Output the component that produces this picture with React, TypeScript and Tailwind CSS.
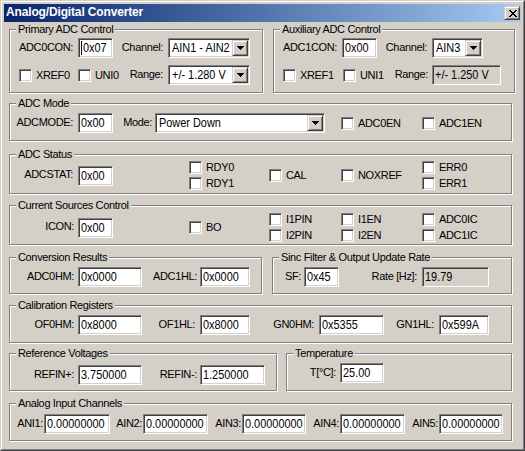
import React from "react";

const SUNKEN =
  "border border-t-[#808080] border-l-[#808080] border-b-white border-r-white shadow-[inset_1px_1px_0_#404040,inset_-1px_-1px_0_#d4d0c8]";
const RAISED =
  "border border-t-[#d4d0c8] border-l-[#d4d0c8] border-b-[#404040] border-r-[#404040] shadow-[inset_1px_1px_0_#fff,inset_-1px_-1px_0_#808080]";
const VAL =
  "font-['Liberation_Sans',Arial,sans-serif] text-[13px] leading-[16px] tracking-normal";
const NARROW = "block shrink-0 origin-left scale-x-[0.84] whitespace-nowrap";

type Kids = { children?: React.ReactNode };

function Lbl({ cls, children }: { cls: string } & Kids) {
  return <div className={`${cls} shrink-0 text-right whitespace-nowrap pb-[2px]`}>{children}</div>;
}

function Edit({ cls, value, gray = false, caret = false }: { cls: string; value: string; gray?: boolean; caret?: boolean }) {
  return (
    <div
      className={`${cls} h-[20px] shrink-0 flex items-center overflow-hidden whitespace-nowrap pl-[2px] ${SUNKEN} ${
        gray ? "bg-[#d4d0c8]" : "bg-white"
      } ${VAL}`}
    >
      {caret && <span className="w-px h-[14px] bg-black mr-[1px] shrink-0" />}
      <span className={NARROW}>{value}</span>
    </div>
  );
}

function Arrow() {
  return (
    <svg width="7" height="4" shapeRendering="crispEdges" className="block">
      <rect x="0" y="0" width="7" height="1" fill="#000" />
      <rect x="1" y="1" width="5" height="1" fill="#000" />
      <rect x="2" y="2" width="3" height="1" fill="#000" />
      <rect x="3" y="3" width="1" height="1" fill="#000" />
    </svg>
  );
}

function Combo({ cls, value }: { cls: string; value: string }) {
  return (
    <div className={`${cls} h-[20px] shrink-0 flex items-center bg-white ${SUNKEN}`}>
      <div className={`flex-1 min-w-0 pl-[3px] overflow-hidden ${VAL}`}>
        <span className={NARROW}>{value}</span>
      </div>
      <div className={`w-[16px] h-[16px] mr-[1px] shrink-0 flex items-center justify-center bg-[#d4d0c8] ${RAISED}`}>
        <Arrow />
      </div>
    </div>
  );
}

function Check({ cls = "", label }: { cls?: string; label: string }) {
  return (
    <div className={`${cls} shrink-0 flex items-center h-[13px]`}>
      <div className={`w-[13px] h-[13px] shrink-0 bg-white ${SUNKEN}`} />
      <span className="ml-[4px] whitespace-nowrap">{label}</span>
    </div>
  );
}

function Group({ title, cls, children }: { title: string; cls: string } & Kids) {
  return (
    <div className={`relative shrink-0 border border-[#808080] shadow-[inset_1px_1px_0_#fff,1px_1px_0_#fff] ${cls}`}>
      <div className="absolute -top-[7px] left-[6px] px-[2px] bg-[#d4d0c8] leading-[13px] whitespace-nowrap">{title}</div>
      {children}
    </div>
  );
}

function CloseX() {
  const rows = [0, 1, 2, 3, 4, 5, 6];
  return (
    <svg width="8" height="7" shapeRendering="crispEdges" className="block ml-[1px]">
      {rows.map((i) => (
        <g key={i}>
          <rect x={i} y={i} width="2" height="1" fill="#000" />
          <rect x={6 - i} y={i} width="2" height="1" fill="#000" />
        </g>
      ))}
    </svg>
  );
}

export default function App() {
  return (
    <div className="w-[525px] h-[451px] bg-[#d4d0c8] border border-t-[#d4d0c8] border-l-[#d4d0c8] border-r-[#404040] border-b-[#404040] font-['Liberation_Sans',Arial,sans-serif] text-[11px] leading-[13px] tracking-[-0.35px] text-black">
      <div className="h-full border border-t-white border-l-white border-r-[#808080] border-b-[#808080] p-[2px]">
        {/* Title bar */}
        <div className="h-[18px] flex items-center bg-linear-to-r from-[#0a246a] to-[#a6caf0] pl-[2px] pr-[1px]">
          <span className="self-start font-bold text-[12px] leading-[17px] tracking-[-0.15px] text-white whitespace-nowrap">
            Analog/Digital Converter
          </span>
          <div className={`ml-auto w-[16px] h-[14px] flex items-center justify-center bg-[#d4d0c8] ${RAISED}`}>
            <CloseX />
          </div>
        </div>

        {/* Body */}
        <div className="flex flex-col pl-[5px]">
          {/* Row 1 */}
          <div className="flex mt-[7px]">
            <Group title="Primary ADC Control" cls="w-[254px] h-[64px] pt-[8px]">
              <div className="flex items-center h-[20px]">
                <Lbl cls="w-[68px] pr-[5px]">ADC0CON:</Lbl>
                <Edit cls="w-[35px]" value="0x07" caret />
                <Lbl cls="w-[55px] pr-[5px]">Channel:</Lbl>
                <Combo cls="w-[82px]" value="AIN1 - AIN2" />
              </div>
              <div className="flex items-center h-[20px] mt-[7px]">
                <Check cls="ml-[9px] w-[59px]" label="XREF0" />
                <Check cls="w-[47px]" label="UNI0" />
                <Lbl cls="w-[43px] pr-[5px]">Range:</Lbl>
                <Combo cls="w-[82px]" value="+/- 1.280 V" />
              </div>
            </Group>
            <Group title="Auxiliary ADC Control" cls="ml-[10px] w-[242px] h-[64px] pt-[8px]">
              <div className="flex items-center h-[20px]">
                <Lbl cls="w-[68px] pr-[5px]">ADC1CON:</Lbl>
                <Edit cls="w-[35px]" value="0x00" />
                <Lbl cls="w-[55px] pr-[5px]">Channel:</Lbl>
                <Combo cls="w-[51px]" value="AIN3" />
              </div>
              <div className="flex items-center h-[20px] mt-[7px]">
                <Check cls="ml-[9px] w-[60px]" label="XREF1" />
                <Check cls="w-[45px]" label="UNI1" />
                <Lbl cls="w-[44px] pr-[4px]">Range:</Lbl>
                <Edit cls="w-[69px]" value="+/- 1.250 V" gray />
              </div>
            </Group>
          </div>

          {/* ADC Mode */}
          <Group title="ADC Mode" cls="mt-[10px] w-[503px] h-[38px] pt-[9px]">
            <div className="flex items-center h-[20px]">
              <Lbl cls="w-[68px] pr-[5px]">ADCMODE:</Lbl>
              <Edit cls="w-[35px]" value="0x00" />
              <Lbl cls="w-[42px] pr-[3px]">Mode:</Lbl>
              <Combo cls="w-[170px]" value="Power Down" />
              <Check cls="ml-[16px] w-[81px]" label="ADC0EN" />
              <Check label="ADC1EN" />
            </div>
          </Group>

          {/* ADC Status */}
          <Group title="ADC Status" cls="mt-[13px] w-[503px] h-[40px] pt-[6px]">
            <div className="flex items-center h-[29px]">
              <Lbl cls="w-[68px] pr-[5px]">ADCSTAT:</Lbl>
              <Edit cls="w-[35px]" value="0x00" />
              <div className="ml-[76px] w-[80px] shrink-0 flex flex-col gap-[3px]">
                <Check label="RDY0" />
                <Check label="RDY1" />
              </div>
              <Check cls="w-[72px]" label="CAL" />
              <Check cls="w-[81px]" label="NOXREF" />
              <div className="shrink-0 flex flex-col gap-[3px]">
                <Check label="ERR0" />
                <Check label="ERR1" />
              </div>
            </div>
          </Group>

          {/* Current Sources Control */}
          <Group title="Current Sources Control" cls="mt-[11px] w-[503px] h-[40px] pt-[7px]">
            <div className="flex items-center h-[29px]">
              <Lbl cls="w-[68px] pr-[4px]">ICON:</Lbl>
              <Edit cls="w-[35px]" value="0x00" />
              <Check cls="ml-[76px] w-[80px]" label="BO" />
              <div className="w-[72px] shrink-0 flex flex-col gap-[3px]">
                <Check label="I1PIN" />
                <Check label="I2PIN" />
              </div>
              <div className="w-[81px] shrink-0 flex flex-col gap-[3px]">
                <Check label="I1EN" />
                <Check label="I2EN" />
              </div>
              <div className="shrink-0 flex flex-col gap-[3px]">
                <Check label="ADC0IC" />
                <Check label="ADC1IC" />
              </div>
            </div>
          </Group>

          {/* Conversion / Sinc */}
          <div className="flex mt-[12px]">
            <Group title="Conversion Results" cls="w-[253px] h-[37px] pt-[9px]">
              <div className="flex items-center h-[20px]">
                <Lbl cls="w-[68px] pr-[4px]">ADC0HM:</Lbl>
                <Edit cls="w-[64px]" value="0x0000" />
                <Lbl cls="w-[58px] pr-[3px]">ADC1HL:</Lbl>
                <Edit cls="w-[50px]" value="0x0000" />
              </div>
            </Group>
            <Group title="Sinc Filter & Output Update Rate" cls="ml-[10px] w-[240px] h-[37px] pt-[9px]">
              <div className="flex items-center h-[20px]">
                <Lbl cls="w-[31px] pr-[3px]">SF:</Lbl>
                <Edit cls="w-[35px]" value="0x45" />
                <Lbl cls="w-[83px] pr-[5px]">Rate [Hz]:</Lbl>
                <Edit cls="w-[67px]" value="19.79" gray />
              </div>
            </Group>
          </div>

          {/* Calibration */}
          <Group title="Calibration Registers" cls="mt-[11px] w-[503px] h-[38px] pt-[9px]">
            <div className="flex items-center h-[20px]">
              <Lbl cls="w-[68px] pr-[4px]">OF0HM:</Lbl>
              <Edit cls="w-[64px]" value="0x8000" />
              <Lbl cls="w-[58px] pr-[5px]">OF1HL:</Lbl>
              <Edit cls="w-[50px]" value="0x8000" />
              <Lbl cls="w-[69px] pr-[5px]">GN0HM:</Lbl>
              <Edit cls="w-[65px]" value="0x5355" />
              <Lbl cls="w-[55px] pr-[5px]">GN1HL:</Lbl>
              <Edit cls="w-[50px]" value="0x599A" />
            </div>
          </Group>

          {/* Reference / Temperature */}
          <div className="flex mt-[10px]">
            <Group title="Reference Voltages" cls="w-[268px] h-[38px] pt-[11px]">
              <div className="flex items-center h-[20px]">
                <Lbl cls="w-[68px] pr-[4px]">REFIN+:</Lbl>
                <Edit cls="w-[64px]" value="3.750000" />
                <Lbl cls="w-[58px] pr-[3px]">REFIN-:</Lbl>
                <Edit cls="w-[65px]" value="1.250000" />
              </div>
            </Group>
            <Group title="Temperature" cls="ml-[9px] w-[226px] h-[38px] pt-[9px]">
              <div className="flex items-center h-[20px]">
                <Lbl cls="w-[53px] pr-[4px]">T[°C]:</Lbl>
                <Edit cls="w-[44px]" value="25.00" />
              </div>
            </Group>
          </div>

          {/* Analog Input Channels */}
          <Group title="Analog Input Channels" cls="mt-[12px] w-[503px] h-[38px] pt-[10px]">
            <div className="flex items-center h-[20px]">
              <Lbl cls="w-[34px] pr-[1px]">ANI1:</Lbl>
              <Edit cls="w-[66px]" value="0.00000000" />
              <Lbl cls="w-[33px] pr-[1px]">AIN2:</Lbl>
              <Edit cls="w-[65px]" value="0.00000000" />
              <Lbl cls="w-[34px] pr-[1px]">AIN3:</Lbl>
              <Edit cls="w-[64px]" value="0.00000000" />
              <Lbl cls="w-[34px] pr-[1px]">AIN4:</Lbl>
              <Edit cls="w-[65px]" value="0.00000000" />
              <Lbl cls="w-[34px] pr-[1px]">AIN5:</Lbl>
              <Edit cls="w-[64px]" value="0.00000000" />
            </div>
          </Group>
        </div>
      </div>
    </div>
  );
}
